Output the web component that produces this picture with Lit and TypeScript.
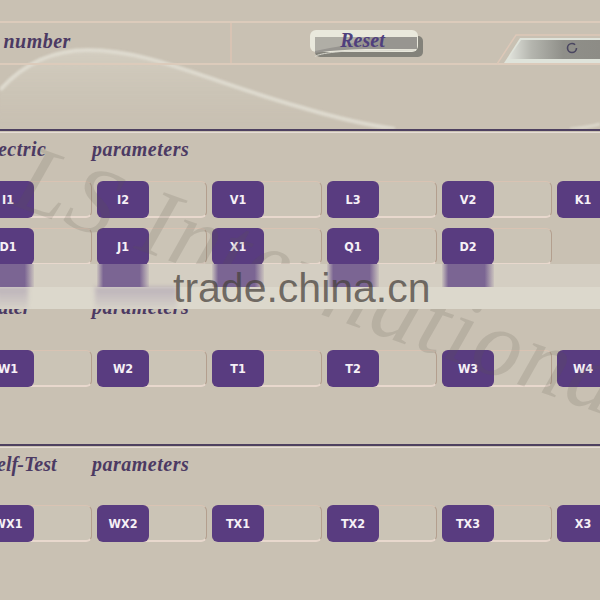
import { LitElement, html, css } from "lit";
import { customElement } from "lit/decorators.js";

const card = (label: string) => html`<div class="card"><div class="key">${label}</div></div>`;

@customElement("app-root")
export class AppRoot extends LitElement {
  static styles = css`
    :host { display: block; width: 600px; height: 600px; }
    .page { position: relative; width: 600px; height: 600px; overflow: hidden; background: #c9c1b3; padding-top: 21px; box-sizing: border-box; font-family: "Liberation Serif", serif; }
    .wave { position: absolute; left: 0; top: 0; width: 600px; height: 129px; filter: blur(1px); }
    .head { position: relative; display: flex; height: 44px; border-top: 2px solid #dccbbb; border-bottom: 2px solid #dccbbb; box-sizing: border-box; margin-bottom: 64px; }
    .num { width: 232px; flex: none; box-sizing: border-box; border-right: 2px solid #d8c3b3; display: flex; align-items: center; }
    .title { font: italic bold 20px "Liberation Serif", serif; color: #4c3a63; letter-spacing: .5px; white-space: nowrap; }
    .num .title { margin-left: -54px; margin-top: -3px; }
    .reset { position: relative; width: 113px; height: 28px; margin: 7px 0 0 78px; flex: none; display: flex; align-items: flex-start; justify-content: center; }
    .reset svg { position: absolute; inset: 0; }
    .reset span { position: relative; font: italic bold 20px "Liberation Serif", serif; color: #4f3f7d; margin: -1px 8px 0 0; }
    .panel { margin: 11px 0 0 74px; flex: none; width: 103px; height: 32px; }
    .rule { border-top: 2px solid #4e4160; box-shadow: 0 1px 0 #e6ddd6; height: 1px; }
    .section { position: relative; }
    .hrow { display: flex; height: 34px; align-items: center; margin-left: -22px; }
    .hrow .title:first-child { width: 114px; flex: none; }
    .hrow .title.water { letter-spacing: 0; margin-left: 4px; width: 110px; }
    .hrow .title.self { letter-spacing: 0; word-spacing: -6px; margin-left: 8px; width: 106px; }
    .grid { display: grid; grid-template-columns: repeat(6, 110px); column-gap: 5px; row-gap: 10px; margin-left: -18px; grid-auto-rows: 37px; }
    .card { border: 1px solid #b39f8e; border-top-color: #d9c3b3; border-bottom: 2px solid #e8d8cd; border-radius: 6px; box-sizing: border-box; background: #cbc4b6; display: flex; }
    .key { width: 52px; margin: -1px 0 -2px -1px; background: #593c80; border-radius: 6px; color: #f6f0f6; font: bold 12.5px "DejaVu Sans Condensed", "DejaVu Sans", sans-serif; display: flex; align-items: center; justify-content: center; }
    .s1 { padding-bottom: 22px; }
    .s1 .grid { margin-top: 15px; }
    .s2 { padding-bottom: 57px; }
    .s2 .grid { margin-top: 26px; }
    .s3 .grid { margin-top: 24px; }
    .mark { position: absolute; left: 20px; top: 118px; font: italic 96px "Liberation Serif", serif; letter-spacing: 2px; color: rgba(95, 85, 75, .16); white-space: nowrap; transform: rotate(19.5deg); transform-origin: 0 50%; pointer-events: none; }
    .band { position: absolute; left: 0; right: 0; top: 264px; height: 45px; background: linear-gradient(#d4cec2 0 23px, #dcd8cc 23px); overflow: hidden; }
    .refl { display: grid; grid-template-columns: repeat(6, 110px); column-gap: 5px; margin-left: -18px; height: 23px; }
    .refl i { display: block; width: 52px; background: linear-gradient(90deg, rgba(120,97,148,.1), #7b6593 12%, #7b6593 82%, rgba(120,97,148,.1)); }
    .refl i.none { background: none; }
    .ghost { position: absolute; top: 23px; height: 22px; background: linear-gradient(rgba(125,105,150,.34), rgba(125,105,150,.06)); filter: blur(2px); }
    .g1 { left: -4px; width: 32px; }
    .g2 { left: 95px; width: 82px; }
    .brand { position: absolute; left: 173px; top: 0; font: 41px/48px "Liberation Sans", sans-serif; color: rgba(70, 64, 58, .72); white-space: nowrap; }
  `;

  render() {
    return html`<div class="page">
      <svg class="wave" viewBox="0 0 600 129">
        <defs>
          <linearGradient id="wf" x1="0" y1="0" x2="0" y2="1"><stop offset="0" stop-color="#dcd8cc" stop-opacity=".55"/><stop offset="1" stop-color="#cfc8ba" stop-opacity="0"/></linearGradient>
        </defs>
        <path d="M0 90C25 62 55 50 88 50C150 50 205 80 300 107C330 116 360 124 395 129L0 129Z" fill="url(#wf)"/>
        <path d="M0 90C25 62 55 50 88 50C150 50 205 80 300 107C330 116 360 124 395 129" fill="none" stroke="#e0ddd1" stroke-width="4" opacity=".9"/>
        <path d="M570 129C580 128 590 127 600 124" fill="none" stroke="#dcd8cc" stroke-width="3"/>
      </svg>
      <div class="head">
        <div class="num"><span class="title">Serial number</span></div>
        <div class="reset">
          <svg width="113" height="28" viewBox="0 0 113 28">
            <rect x="5" y="6" width="108" height="21" rx="5" fill="#83827a"/>
            <rect x="0" y="0" width="108" height="22" rx="6" fill="#e9e8dc"/>
            <path d="M5 7H107V19H62C45 19 25 20 5 23Z" fill="#979590"/>
            <path d="M5 7H60C45 14 25 17 5 21Z" fill="#b0aea6"/>
            <path d="M5 27C5 24 30 20 60 21L105 20" stroke="#d9d8ce" fill="none" stroke-width="1"/>
          </svg>
          <span>Reset</span>
        </div>
        <svg class="panel" viewBox="0 0 103 32">
          <defs>
            <linearGradient id="pg" x1="0" y1="0" x2="1" y2="0"><stop offset="0" stop-color="#e2e4dd"/><stop offset=".25" stop-color="#b5b6af"/><stop offset=".6" stop-color="#8f8f89"/><stop offset="1" stop-color="#8d8c86"/></linearGradient>
          </defs>
          <path d="M0 30L19 1H103" fill="none" stroke="#ddc8b8" stroke-width="1.5"/>
          <path d="M7 29L23 4H103V29Z" fill="#dfe3da"/>
          <path d="M11 25L24 6H103V25Z" fill="url(#pg)"/>
          <circle cx="75" cy="14" r="4.5" fill="none" stroke="#4a4660" stroke-width="1.6" stroke-dasharray="24 4"/>
        </svg>
      </div>

      <section class="section s1">
        <div class="rule"></div>
        <div class="hrow"><span class="title">Electric</span><span class="title">parameters</span></div>
        <div class="grid">${["I1","I2","V1","L3","V2","K1","D1","J1","X1","Q1","D2"].map(card)}</div>
      </section>
      <section class="section s2">
        <div class="rule"></div>
        <div class="hrow"><span class="title water">Water</span><span class="title">parameters</span></div>
        <div class="grid">${["W1","W2","T1","T2","W3","W4"].map(card)}</div>
      </section>
      <section class="section s3">
        <div class="rule"></div>
        <div class="hrow"><span class="title self">Self -Test</span><span class="title">parameters</span></div>
        <div class="grid">${["WX1","WX2","TX1","TX2","TX3","X3"].map(card)}</div>
      </section>

      <div class="mark">LS International</div>
      <div class="band">
        <div class="refl"><i></i><i></i><i></i><i></i><i></i><i class="none"></i></div>
        <div class="ghost g1"></div><div class="ghost g2"></div>
        <div class="brand">trade.china.cn</div>
      </div>
    </div>`;
  }
}
